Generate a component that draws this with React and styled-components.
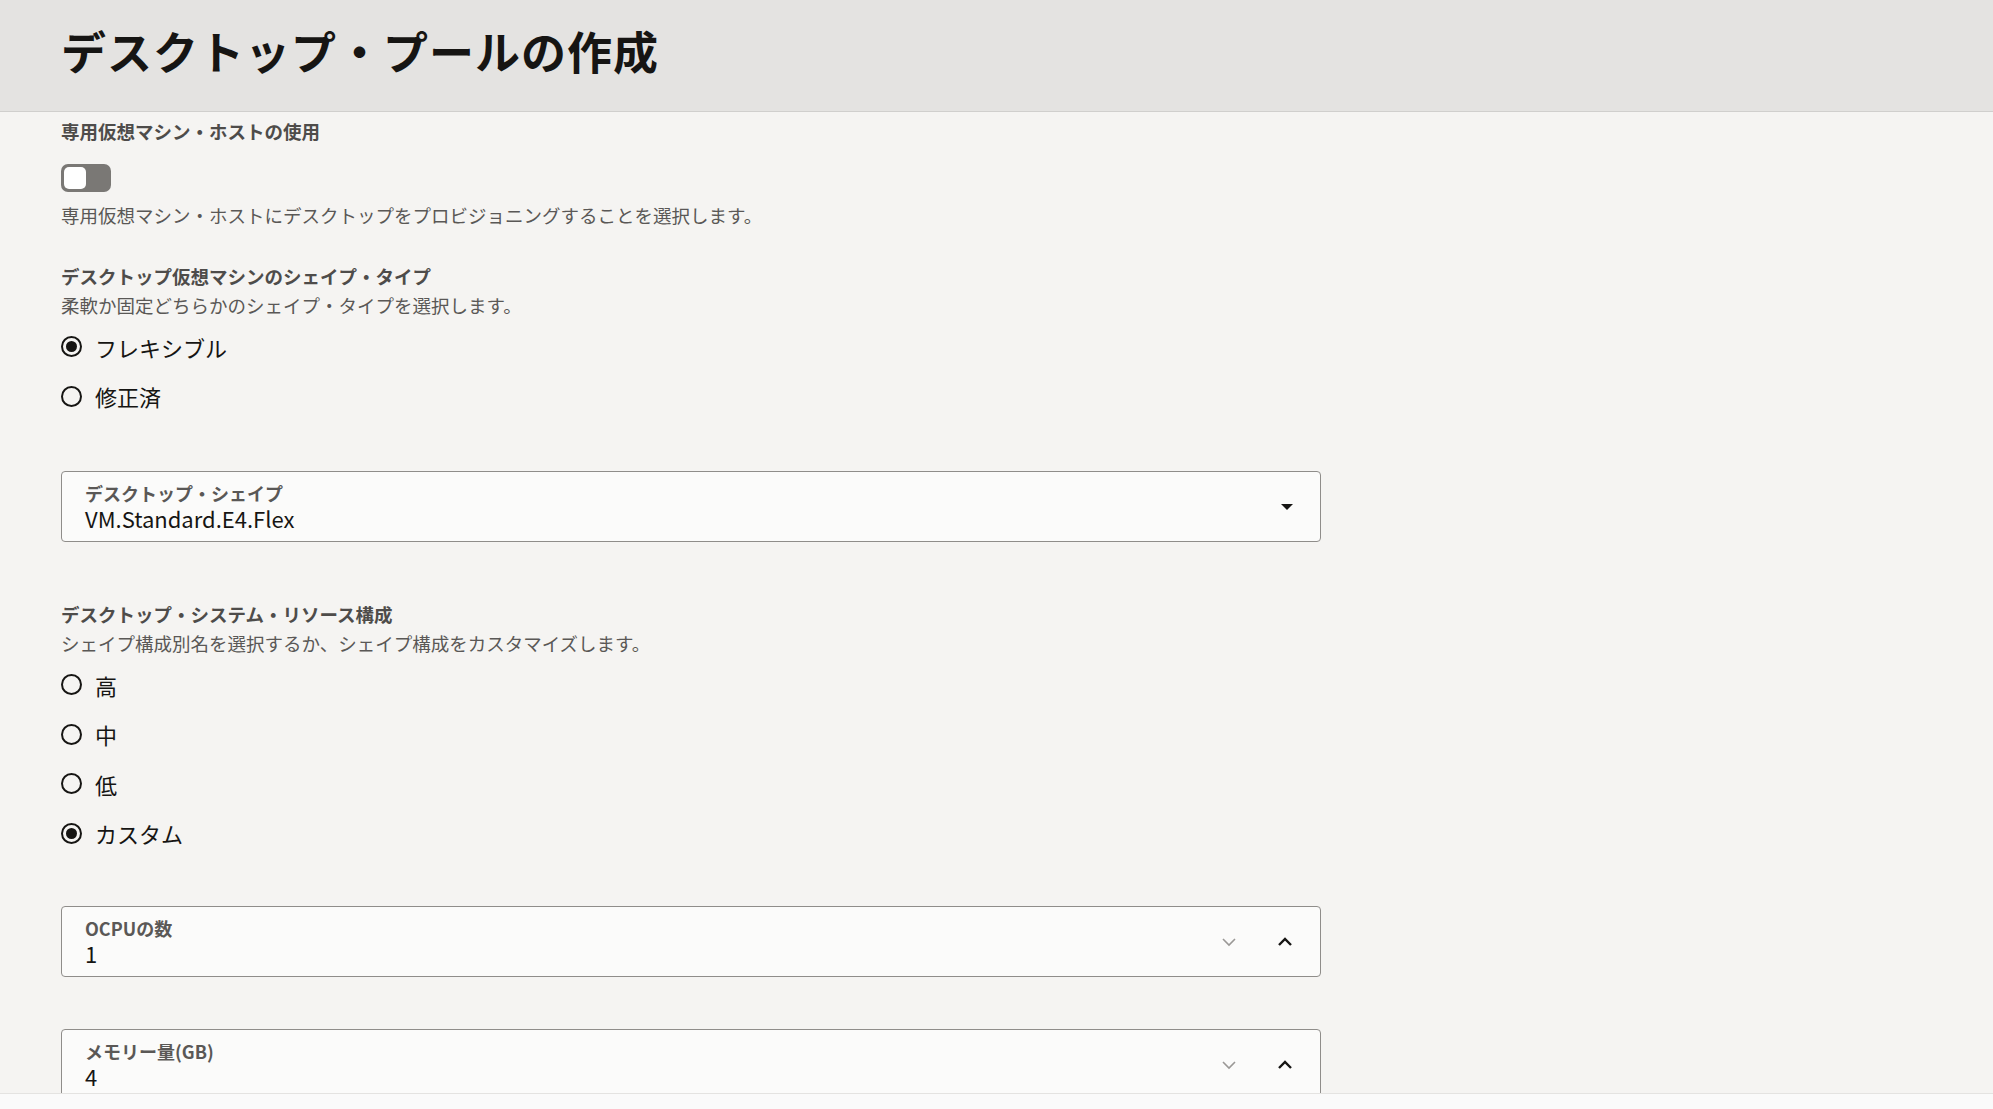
import React, { useState } from 'react';
import styled, { createGlobalStyle } from 'styled-components';

const Global = createGlobalStyle`
  html, body { margin: 0; height: 100%; overflow: hidden; }
  body { background: #f5f4f2; font-family: "Noto Sans CJK JP", "Noto Sans", sans-serif; color: #161513; }
`;

const Page = styled.div`
  height: 1109px;
  display: flex;
  flex-direction: column;
`;

const Header = styled.div`
  height: 112px;
  flex: none;
  background: #e4e3e1;
  border-bottom: 1px solid #d0cfcd;
  display: flex;
  align-items: center;
  padding: 0 61px 10px;
  box-sizing: border-box;
`;

const Title = styled.h1`
  margin: 0;
  font-size: 45px;
  font-weight: 700;
  letter-spacing: 1px;
`;

const Body = styled.div`
  flex: 1;
  overflow: hidden;
  padding: 6px 61px 0;
`;

const Footer = styled.div`
  height: 15px;
  flex: none;
  background: #fafafa;
  border-top: 1px solid #e4e3e1;
`;

const Label = styled.div`
  font-size: 18.5px;
  font-weight: 700;
  color: #4e4c4a;
  line-height: 26px;
  margin-top: ${p => p.$top || 0}px;
`;

const Help = styled.div`
  font-size: 18.5px;
  color: #5a5856;
  line-height: 26px;
  margin-top: ${p => p.$top || 0}px;
`;

const Toggle = styled.div`
  width: 50px;
  height: 28px;
  margin-top: 20px;
  border-radius: 7px;
  background: #7a7875;
  box-sizing: border-box;
  padding: 3px;
  margin-bottom: 10px;
`;

const Knob = styled.div`
  width: 22px;
  height: 22px;
  border-radius: 5px;
  background: #fff;
`;

const RadioGroup = styled.div`
  display: flex;
  flex-direction: column;
  margin-top: 4px;
`;

const RadioRow = styled.label`
  display: flex;
  align-items: center;
  gap: 13px;
  height: 49.5px;
  font-size: 22px;
`;

const Circle = styled.span`
  width: 21px;
  height: 21px;
  border-radius: 50%;
  border: 2px solid #161513;
  box-sizing: border-box;
  display: flex;
  align-items: center;
  justify-content: center;
  &::after {
    content: '';
    width: 11px;
    height: 11px;
    border-radius: 50%;
    background: ${p => (p.$on ? '#161513' : 'transparent')};
  }
`;

const Field = styled.div`
  width: 1260px;
  height: 71px;
  box-sizing: border-box;
  border: 1px solid #8f8d8a;
  border-radius: 4px;
  background: #fbfbfa;
  display: flex;
  align-items: center;
  padding: 0 26px 0 23px;
  margin-top: ${p => p.$top || 0}px;
`;

const FieldText = styled.div`
  flex: 1;
  display: flex;
  flex-direction: column;
`;

const FieldLabel = styled.div`
  font-size: 18px;
  font-weight: 700;
  color: #5a5856;
  line-height: 22px;
`;

const FieldValue = styled.div`
  font-size: 22px;
  line-height: 28px;
`;

const Icons = styled.div`
  display: flex;
  align-items: center;
  gap: 38px;
`;

const Radio = ({ on, children }) => (
  <RadioRow>
    <Circle $on={on} />
    {children}
  </RadioRow>
);

const Chevron = ({ up, color }) => (
  <svg width="18" height="12" viewBox="0 0 18 12">
    <path d={up ? 'M3 9 L9 3 L15 9' : 'M3 3 L9 9 L15 3'} fill="none" stroke={color} strokeWidth={up ? 2.4 : 1.6} />
  </svg>
);

const NumberField = ({ label, value, top }) => (
  <Field $top={top}>
    <FieldText>
      <FieldLabel>{label}</FieldLabel>
      <FieldValue>{value}</FieldValue>
    </FieldText>
    <Icons>
      <Chevron color="#9a9896" />
      <Chevron up color="#161513" />
    </Icons>
  </Field>
);

export default function App() {
  const [shape] = useState('flex');
  const [res] = useState('custom');
  return (
    <Page>
      <Global />
      <Header>
        <Title>デスクトップ・プールの作成</Title>
      </Header>
      <Body>
        <Label>専用仮想マシン・ホストの使用</Label>
        <Toggle><Knob /></Toggle>
        <Help>専用仮想マシン・ホストにデスクトップをプロビジョニングすることを選択します。</Help>

        <Label $top={35}>デスクトップ仮想マシンのシェイプ・タイプ</Label>
        <Help $top={3}>柔軟か固定どちらかのシェイプ・タイプを選択します。</Help>
        <RadioGroup>
          <Radio on={shape === 'flex'}>フレキシブル</Radio>
          <Radio on={shape === 'fixed'}>修正済</Radio>
        </RadioGroup>

        <Field $top={50}>
          <FieldText>
            <FieldLabel>デスクトップ・シェイプ</FieldLabel>
            <FieldValue>VM.Standard.E4.Flex</FieldValue>
          </FieldText>
          <svg width="14" height="8" viewBox="0 0 14 8"><path d="M1 1 L7 7 L13 1 Z" fill="#161513" /></svg>
        </Field>

        <Label $top={59}>デスクトップ・システム・リソース構成</Label>
        <Help $top={3}>シェイプ構成別名を選択するか、シェイプ構成をカスタマイズします。</Help>
        <RadioGroup>
          <Radio on={res === 'high'}>高</Radio>
          <Radio on={res === 'mid'}>中</Radio>
          <Radio on={res === 'low'}>低</Radio>
          <Radio on={res === 'custom'}>カスタム</Radio>
        </RadioGroup>

        <NumberField top={48} label="OCPUの数" value="1" />
        <NumberField top={52} label="メモリー量(GB)" value="4" />
      </Body>
      <Footer />
    </Page>
  );
}
